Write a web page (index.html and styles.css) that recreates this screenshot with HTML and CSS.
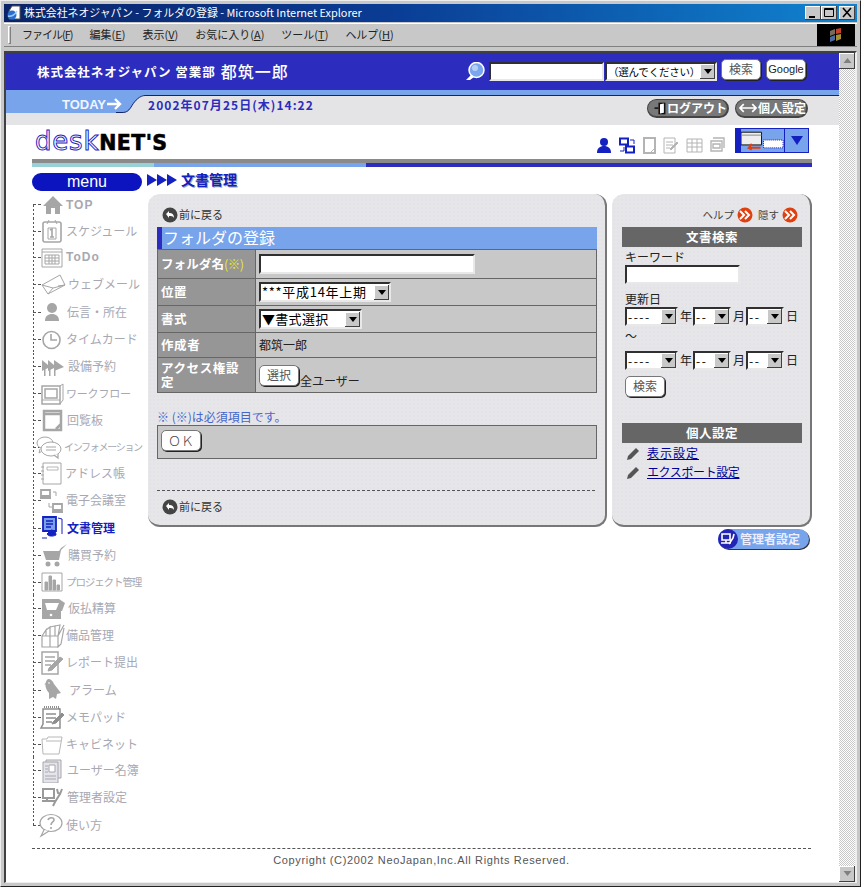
FILE: index.html
```html
<!DOCTYPE html>
<html lang="ja">
<head>
<meta charset="utf-8">
<title>フォルダの登録</title>
<link rel="stylesheet" href="styles.css">
</head>
<body>
<div class="window">
  <div class="titlebar">
    <svg class="title-icon" width="16" height="16" viewBox="0 0 16 16"><path d="M6 1h8v13H3V6z" fill="#fff" stroke="#555"/><circle cx="6" cy="10" r="4.5" fill="#2a6fd0"/><path d="M2 11c3 1 7-1 9-5" stroke="#9fd0ff" stroke-width="1.5" fill="none"/></svg>
    <span class="title-text">株式会社ネオジャパン - フォルダの登録 - Microsoft Internet Explorer</span>
    <div class="win-btns">
      <span class="win-btn"><svg width="14" height="12" viewBox="0 0 14 12"><path d="M3 9h6v2H3z"/></svg></span>
      <span class="win-btn"><svg width="14" height="12" viewBox="0 0 14 12"><path d="M2.5 1.5h9v8h-9z M2.5 2.5h9" fill="none" stroke="#000"/></svg></span>
      <span class="win-btn win-close"><svg width="14" height="12" viewBox="0 0 14 12"><path d="M3 1l8 9M11 1l-8 9" stroke="#000" stroke-width="1.6"/></svg></span>
    </div>
  </div>
  <div class="menubar">
    <span class="grip"></span>
    <span class="m m1">ファイル(<u>F</u>)</span>
    <span class="m">編集(<u>E</u>)</span>
    <span class="m">表示(<u>V</u>)</span>
    <span class="m">お気に入り(<u>A</u>)</span>
    <span class="m">ツール(<u>T</u>)</span>
    <span class="m">ヘルプ(<u>H</u>)</span>
    <span class="throbber"><svg width="16" height="16" viewBox="0 0 16 16"><path d="M2 4l5-2v5l-5 2z" fill="#7a6a5a"/><path d="M8 2l5-1v5l-5 1z" fill="#c8402a"/><path d="M2 10l5-2v5l-5 2z" fill="#4a6aa0"/><path d="M8 8l5-1v5l-5 2z" fill="#a89030"/></svg></span>
  </div>
  <div class="viewport">
    <div class="page">
      <header class="head">
        <span class="org">株式会社ネオジャパン 営業部</span>
        <span class="user">都筑一郎</span>
        <div class="search">
          <svg width="22" height="20" viewBox="0 0 22 20"><circle cx="12.5" cy="8" r="7.5" fill="#7aa6ee" stroke="#fff" stroke-width="1.5"/><circle cx="11" cy="6" r="3" fill="#b9d0f6"/><path d="M7 13l-5 5h4l4-3z" fill="#fff"/></svg>
          <input class="field head-field" type="text">
          <div class="sel sel-google"><span class="sel-text">（選んでください）</span><span class="sel-arrow"></span></div>
          <button class="btn btn-head">検索</button>
          <button class="btn btn-head btn-google">Google</button>
        </div>
      </header>
      <div class="today">
        <div class="today-tab">TODAY<svg width="15" height="12" viewBox="0 0 15 12"><path d="M0 6h13M8 1l5 5-5 5" fill="none" stroke="#fff" stroke-width="2.4"/></svg></div>
        <svg class="today-curve" width="23" height="18" viewBox="0 0 23 18"><path d="M0 18c5 0 7-2 10-7S18 0 23 0H0z" fill="#78a4ec"/><path d="M-6 17.500h6c5 0 7-2 10-7S18 .5 23 .5" fill="none" stroke="#12246a"/></svg>
        <span class="date">2002年07月25日(木)14:22</span>
        <div class="pills">
          <span class="pill pill-out"><svg width="18" height="17" viewBox="0 0 18 17"><path d="M7 1h9v15H7z" fill="#111"/><path d="M9 3l5-1v12l-5 1z" fill="#fff"/><path d="M2 8h5" stroke="#111" stroke-width="2"/></svg>ログアウト</span>
          <span class="pill pill-set"><svg width="19" height="10" viewBox="0 0 19 10"><path d="M1 5h17M5 1L1 5l4 4M14 1l4 4-4 4" fill="none" stroke="#fff" stroke-width="1.8"/></svg>個人設定</span>
        </div>
      </div>
      <div class="brand">
        <div class="logo"><span class="logo-a">desk</span><span class="logo-b">NET'S</span></div>
        <div class="tools">
          <svg width="16" height="17" viewBox="0 0 16 17"><circle cx="8" cy="5" r="4" fill="#1420c0"/><path d="M1 16c0-5 3-7 7-7s7 2 7 7z" fill="#1420c0"/></svg>
          <svg width="16" height="17" viewBox="0 0 16 17" fill="none" stroke="#1420c0"><path d="M1 1.5h8v6H1zM7 9.5h8v6H7z" stroke-width="2"/><path d="M11 3h4v4M5 10v4h-4"/></svg>
          <svg width="15" height="17" viewBox="0 0 15 17" fill="none" stroke="#b4b4b4" stroke-width="2"><path d="M2 1h11v15H2z"/><path d="M9 15l4-4" stroke-width="1"/></svg>
          <svg class="t6" width="16" height="17" viewBox="0 0 16 17" fill="none" stroke="#b4b4b4"><path d="M1 1h11v15H1zM3 5h7M3 8h7M3 11h4"/><path d="M7 12l7-7 1 1-7 7z" fill="#b4b4b4"/></svg>
          <svg width="17" height="17" viewBox="0 0 17 17" fill="none" stroke="#b4b4b4"><path d="M1 2h15v13H1zM1 6h15M1 10h15M6 2v13M11 2v13"/></svg>
          <svg width="15" height="17" viewBox="0 0 15 17" fill="none" stroke="#b4b4b4" stroke-width="1.4"><path d="M1 4h11v10H1zM3 1h11v10M3 7h7v4H3z"/></svg>
          <div class="layout-box">
            <svg width="44" height="22" viewBox="0 0 44 22"><path d="M0 2h21v13H0z" fill="#eee" stroke="#111"/><path d="M0 5h21" stroke="#888"/><path d="M23 10h20v8H23z" fill="#fff" stroke="#1420c0" stroke-dasharray="1 1"/><path d="M20 18H8l3-4M8 18l3 2" stroke="#e04010" stroke-width="2" fill="none"/></svg>
            <span class="layout-arrow"></span>
          </div>
        </div>
      </div>
      <div class="rule"><span class="r1"></span><span class="r2"></span><span class="r3"></span></div>
      <div class="wrap">
        <div class="crumbs">
          <span class="menu-pill">menu</span>
          <svg class="tri" width="30" height="12" viewBox="0 0 30 12" fill="#1420c0"><path d="M0 0l10 6-10 6zM10 0l10 6-10 6zM20 0l10 6-10 6z"/></svg>
          <span class="crumb-title">文書管理</span>
        </div>
        <div class="columns">
          <nav class="nav">
            <div class="row first"><svg width="25" height="24" viewBox="0 0 25 24" fill="#a6a6a6"><path d="M12 3L2 13h3v8h14v-8h3z"/><path d="M10 15h4v6h-4z" fill="#fff"/></svg><span>TOP</span></div>
            <div class="row s"><svg width="25" height="24" viewBox="0 0 25 24" fill="none" stroke="#a6a6a6"><path d="M4 3h14q2 0 2 2v16q0 2-2 2H4q-2 0-2-2V5q0-2 2-2z" stroke-width="1.600"/><path d="M6 5l2-4M16 5l-2-4"/><path d="M7 9h8v11H7z"/><path d="M9 11l2-1v8M9 18h4" stroke-width="1.600"/></svg><span>スケジュール</span></div>
            <div class="row"><svg width="25" height="24" viewBox="0 0 25 24" fill="none" stroke="#a6a6a6"><path d="M1 3h20v18H1z"/><path d="M1 6h20"/><path d="M4 9h14v9H4zM4 12h14M4 15h14M8 9v9M11 9v9M14 9v9"/></svg><span class="lat">ToDo</span></div>
            <div class="row"><svg width="27" height="24" viewBox="0 0 27 24" fill="#fff" stroke="#a6a6a6"><path d="M1 12L19 2l5 10L7 21z"/><path d="M1 12l11 3 12-3M7 21l5-6M24 12l-7 1"/></svg><span>ウェブメール</span></div>
            <div class="row l"><svg width="26" height="24" viewBox="0 0 26 24" fill="#a6a6a6"><circle cx="11" cy="8" r="5"/><path d="M4 21c0-5 3-7 7-7s7 2 7 7z"/></svg><span>伝言・所在</span></div>
            <div class="row"><svg width="25" height="24" viewBox="0 0 25 24" fill="none" stroke="#a6a6a6" stroke-width="1.6"><circle cx="10.5" cy="12" r="8.5"/><path d="M10 6v6h6"/></svg><span>タイムカード</span></div>
            <div class="row"><svg width="27" height="24" viewBox="0 0 27 24" fill="#a6a6a6"><path d="M1 5l6 5v-5l6 5v-5l10 7-10 4v-3l-6 3v-3l-6 3z"/><path d="M3 12h1.500v9H3zM8 12h1.500v9H8zM13 12h1.500v9H13z"/></svg><span>設備予約</span></div>
            <div class="row"><svg width="25" height="24" viewBox="0 0 25 24" fill="none" stroke="#a6a6a6"><path d="M1 4h18v18H1z" stroke-width="1.500"/><path d="M4 7h12v9H4z" stroke-width="1.500"/><path d="M1 18h18M19 4l3-2v16l-3 4"/></svg><span class="n11">ワークフロー</span></div>
            <div class="row"><svg width="26" height="24" viewBox="0 0 26 24" fill="none" stroke="#a6a6a6" stroke-width="2.500"><path d="M3 2h17v19H3zM3 5h17M15 20l5-5"/></svg><span>回覧板</span></div>
            <div class="row s"><svg width="23" height="24" viewBox="0 0 23 24" fill="#fff" stroke="#a6a6a6" overflow="visible"><ellipse cx="4" cy="8" rx="8" ry="6"/><path d="M-1 14l-1 4 5-3"/><ellipse cx="10" cy="14" rx="10" ry="7"/><path d="M5 12h10M5 15h10M13 20l4 3v-4" stroke-width="1.200"/></svg><span class="n9">インフォメーション</span></div>
            <div class="row"><svg width="24" height="24" viewBox="0 0 24 24" fill="none" stroke="#a6a6a6"><path d="M2 1h18v21H2z"/><path d="M0 5h3M0 9h3M0 13h3M0 17h3"/><path d="M6 5h11v3H6z" stroke-width=".8"/></svg><span>アドレス帳</span></div>
            <div class="row"><svg width="25" height="24" viewBox="0 0 25 24" fill="none" stroke="#a6a6a6" overflow="visible"><path d="M0 1h9v6H0zM-1 9h11M12 15h9v6h-9zM11 23h11" stroke-width="1.800"/><path d="M12 3h3v4M8 14v4h3"/></svg><span>電子会議室</span></div>
            <div class="row l on"><svg width="26" height="24" viewBox="0 0 26 24" fill="none" stroke="#1420c0"><path d="M2 1h13v14H2z" fill="#7aa0ea" stroke-width="1.800"/><path d="M5 5h7M5 8h7M5 11h5" stroke-width="1.500"/><path d="M17 2l4 1v15"/><path d="M1 22h5M10 14c3 0 5 2 5 5-4 2-8 1-9-1z" fill="#1420c0"/></svg><span>文書管理</span></div>
            <div class="row"><svg width="27" height="24" viewBox="0 0 27 24" fill="#a6a6a6"><path d="M2 7h16l2-3 6-4-6 6-2 10H5z"/><circle cx="7" cy="20" r="2.500"/><circle cx="16" cy="20" r="2.500"/></svg><span>購買予約</span></div>
            <div class="row s"><svg width="25" height="24" viewBox="0 0 25 24" fill="none" stroke="#a6a6a6"><path d="M1 3h20v18H1z"/><path d="M4 12h2.500v8H4zM8 6h2.500v14H8zM12 10h2.500v10H12zM16 15h2.500v5H16z" fill="#a6a6a6"/></svg><span class="n10">プロジェクト管理</span></div>
            <div class="row"><svg width="27" height="24" viewBox="0 0 27 24" fill="#a6a6a6"><path d="M1 2h17l6 4-3 8H1z"/><path d="M1 14h19v8H1z"/><path d="M4 6h14l-3 7H6z" fill="#fff"/><circle cx="10" cy="18" r="1.300" fill="#fff"/></svg><span>仮払精算</span></div>
            <div class="row"><svg width="25" height="24" viewBox="0 0 25 24" fill="none" stroke="#a6a6a6" stroke-width="1.200"><path d="M1 12h16v11H1zM9 12v11M1 12l4-6v6M5 6l4-3v9M9 3l5-1v10M14 2l5-1-2 11M23 1l-6 11v11l3-3 3-16"/></svg><span>備品管理</span></div>
            <div class="row"><svg width="25" height="24" viewBox="0 0 25 24" fill="none" stroke="#a6a6a6"><path d="M1 1h16v22H1z" stroke-width="1.500"/><path d="M4 6h10M4 10h10M4 14h6" stroke-width="1.500"/><path d="M8 17l11-11 3 2-11 11-4 1z" fill="#a6a6a6"/></svg><span>レポート提出</span></div>
            <div class="row l"><svg width="28" height="24" viewBox="0 0 28 24" fill="#a6a6a6"><path d="M7 1c3 0 5 2 6 5l7 9-4 1-1 5-3-2-4 2v-6C4 11 3 4 7 1z"/><path d="M3 6l3-1v2z"/><circle cx="8" cy="5" r=".8" fill="#fff"/></svg><span>アラーム</span></div>
            <div class="row"><svg width="25" height="24" viewBox="0 0 25 24" fill="none" stroke="#8f8f8f" overflow="visible"><path d="M2 3h17v19H0l2-4z" stroke-width="1.500"/><path d="M3 1h15v2" stroke-dasharray="1 1" stroke-width="2"/><path d="M5 8h10M5 12h10M5 16h6" stroke-width="1.600"/><path d="M12 16l9-9 2 2-8 8-4 1z" fill="#8f8f8f"/></svg><span>メモパッド</span></div>
            <div class="row s"><svg width="25" height="24" viewBox="0 0 25 24" fill="none" stroke="#b8b8b8"><path d="M1 7h5l1-2h14l-3 17H2zM5 9h15"/></svg><span>キャビネット</span></div>
            <div class="row"><svg width="26" height="24" viewBox="0 0 26 24" fill="#e4e4ee" stroke="#a6a6a6"><path d="M5 1h15v18H5z"/><path d="M2 3h15v21H2z"/><path d="M4 7h3M4 10h3M4 13h3M4 17h11M4 20h11" fill="none"/><path d="M8 6h6v7H8z" fill="#fff"/></svg><span>ユーザー名簿</span></div>
            <div class="row"><svg width="26" height="24" viewBox="0 0 26 24" fill="none" stroke="#9a9a9a" stroke-width="2"><path d="M2 3h11v9H2zM1 15h13M6 12v3"/><path d="M21 3l-2 5-5 8-2 4M16 3l1 4 3 1"/></svg><span>管理者設定</span></div>
            <div class="row last l"><svg width="25" height="24" viewBox="0 0 25 24" fill="#fff" stroke="#a6a6a6" stroke-width="1.200" overflow="visible"><ellipse cx="10" cy="10" rx="11" ry="8.500"/><path d="M3 17l-3 6 8-5"/><path d="M7 7c1-3 6-3 6 0 0 2-3 2-3 5M10 14v2" fill="none" stroke-width="1.600"/></svg><span>使い方</span></div>
          </nav>
          <div class="content">
            <div class="panels">
              <main class="panel panel-main">
                <a class="back"><svg width="16" height="16" viewBox="0 0 16 16"><circle cx="8" cy="8" r="7.500" fill="#444"/><path d="M4 7l3-3v2c3 0 5 1 5 5-1-2-3-2-5-2v2z" fill="#fff"/></svg>前に戻る</a>
                <h1 class="form-title">フォルダの登録</h1>
                <table class="form">
                  <tr class="r-name"><th>フォルダ名<em>(※)</em></th><td><input class="field name-field" type="text"></td></tr>
                  <tr class="r-pos"><th>位置</th><td><div class="sel sel-pos"><span class="sel-text">***平成14年上期</span><span class="sel-arrow"></span></div></td></tr>
                  <tr class="r-pos"><th>書式</th><td><div class="sel sel-fmt"><span class="sel-text">▼書式選択</span><span class="sel-arrow"></span></div></td></tr>
                  <tr class="r-auth"><th>作成者</th><td>都筑一郎</td></tr>
                  <tr class="r-acc"><th>アクセス権設定</th><td><div class="acc"><button class="btn">選択</button><span>全ユーザー</span></div></td></tr>
                </table>
                <p class="note">※ (※)は必須項目です。</p>
                <div class="okbar"><button class="btn btn-ok">ＯＫ</button></div>
                <div class="dots"></div>
                <a class="back"><svg width="16" height="16" viewBox="0 0 16 16"><circle cx="8" cy="8" r="7.500" fill="#444"/><path d="M4 7l3-3v2c3 0 5 1 5 5-1-2-3-2-5-2v2z" fill="#fff"/></svg>前に戻る</a>
              </main>
              <aside class="panel panel-side">
                <div class="side-top">
                  <span>ヘルプ</span><svg width="16" height="16" viewBox="0 0 16 16"><circle cx="8" cy="8" r="7.500" fill="#e0400f"/><path d="M3 4l4 4-4 4M8 4l4 4-4 4" fill="none" stroke="#fff" stroke-width="2"/></svg>
                  <span class="hide">隠す</span><svg width="16" height="16" viewBox="0 0 16 16"><circle cx="8" cy="8" r="7.500" fill="#e0400f"/><path d="M3 4l4 4-4 4M8 4l4 4-4 4" fill="none" stroke="#fff" stroke-width="2"/></svg>
                </div>
                <h2 class="side-head">文書検索</h2>
                <div class="side-form">
                  <label class="lbl">キーワード</label>
                  <input class="field kw-field" type="text">
                  <label class="lbl lbl-date">更新日</label>
                  <div class="dates">
                    <div class="sel sel-y"><span class="sel-text">----</span><span class="sel-arrow"></span></div><span>年</span>
                    <div class="sel sel-m"><span class="sel-text">--</span><span class="sel-arrow"></span></div><span>月</span>
                    <div class="sel sel-m"><span class="sel-text">--</span><span class="sel-arrow"></span></div><span>日</span>
                  </div>
                  <div class="tilde">～</div>
                  <div class="dates">
                    <div class="sel sel-y"><span class="sel-text">----</span><span class="sel-arrow"></span></div><span>年</span>
                    <div class="sel sel-m"><span class="sel-text">--</span><span class="sel-arrow"></span></div><span>月</span>
                    <div class="sel sel-m"><span class="sel-text">--</span><span class="sel-arrow"></span></div><span>日</span>
                  </div>
                  <button class="btn btn-search">検索</button>
                </div>
                <h2 class="side-head side-head2">個人設定</h2>
                <ul class="links">
                  <li><svg width="15" height="15" viewBox="0 0 15 15"><path d="M1 14l1-4 8-8 3 3-8 8z" fill="#555"/></svg><a class="wide" href="#">表示設定</a></li>
                  <li><svg width="15" height="15" viewBox="0 0 15 15"><path d="M1 14l1-4 8-8 3 3-8 8z" fill="#555"/></svg><a class="tight" href="#">エクスポート設定</a></li>
                </ul>
              </aside>
            </div>
            <div class="admin"><span class="admin-pill"><svg width="21" height="20" viewBox="0 0 21 20"><circle cx="10" cy="10" r="10" fill="#2424b4"/><path d="M4 5h8v6H4zM3 14h10M8 11v3M16 5l-1 4-4 6" fill="none" stroke="#fff" stroke-width="1.600"/></svg>管理者設定</span></div>
          </div>
        </div>
        <footer class="foot">Copyright (C)2002 NeoJapan,Inc.All Rights Reserved.</footer>
      </div>
    </div>
    <div class="scrollbar">
      <span class="sb-btn"><svg width="9" height="6" viewBox="0 0 9 6"><path d="M4.500 0l4 5h-8z" fill="#808080"/></svg></span>
      <span class="sb-track"></span>
      <span class="sb-btn"><svg width="9" height="6" viewBox="0 0 9 6"><path d="M4.500 5l4-5h-8z" fill="#808080"/></svg></span>
    </div>
  </div>
</div>
</body>
</html>
```

FILE: styles.css
```css
* { box-sizing: border-box; }
html, body { margin: 0; padding: 0; }
body {
  width: 861px; height: 887px; overflow: hidden; background: #c8c8c8;
  font-family: "Noto Sans CJK JP", "Liberation Sans", sans-serif;
  font-size: 12px; line-height: 1.2; color: #222;
}
.window {
  height: 887px; display: flex; flex-direction: column; padding: 3px;
  border: 1px solid #808080; border-top-color: #eee; border-left-color: #eee;
  border-right-color: #222; border-bottom-color: #222;
}
.titlebar {
  height: 18px; flex: none; display: flex; align-items: center; padding-left: 2px;
  background: linear-gradient(90deg, #0a246a 0%, #0a3c94 45%, #1084d0 100%);
  color: #fff;
}
.title-icon { flex: none; }
.title-text { margin-left: 2px; font-size: 10.900px; white-space: nowrap; }
.win-btns { margin-left: auto; display: flex; padding-right: 2px; }
.win-btn {
  width: 16px; height: 14px; background: #c8c8c8; display: flex; align-items: center; justify-content: center;
  box-shadow: inset -1px -1px 0 #404040, inset 1px 1px 0 #fff;
}
.win-close { margin-left: 2px; }
.menubar {
  height: 24px; flex: none; margin-top: 1px; display: flex; align-items: center;
  border-top: 1px solid #fff; border-bottom: 1px solid #808080; font-size: 11px; color: #222;
}
.grip { width: 3px; height: 18px; margin-left: 4px; margin-right: 11px; border: 1px solid; border-color: #fff #808080 #808080 #fff; flex: none; }
.m { margin-right: 17px; white-space: nowrap; }
.m1 { letter-spacing: -1px; }
.throbber { margin-left: auto; margin-right: 2px; width: 38px; height: 22px; background: #000; display: flex; align-items: center; justify-content: center; }
.viewport {
  flex: 1; margin-top: 4px; display: flex; min-height: 0;
  border-top: 2px solid #404040; border-left: 2px solid #404040;
  border-right: 2px solid #eee; border-bottom: 1px solid #eee;
}
.page { flex: 1; background: #fff; display: flex; flex-direction: column; min-width: 0; overflow: hidden; }
.scrollbar { width: 16px; flex: none; display: flex; flex-direction: column; }
.sb-btn { height: 16px; flex: none; background: #c8c8c8; display: flex; align-items: center; justify-content: center; box-shadow: inset -1px -1px 0 #404040, inset 1px 1px 0 #fff; }
.sb-track { flex: 1; background: repeating-conic-gradient(#fff 0 25%, #c8c8c8 0 50%) 0 0 / 2px 2px; }

.head { height: 37px; flex: none; background: #2c2cbe; display: flex; align-items: center; padding-left: 31px; color: #fff; }
.org { font-size: 12.500px; font-weight: 700; letter-spacing: .95px; white-space: nowrap; }
.user { margin-left: 5px; font-size: 16px; font-weight: 500; letter-spacing: 1px; white-space: nowrap; }
.search { margin-left: auto; display: flex; align-items: center; margin-right: 33px; }
.field {
  display: block; background: #fff; border: 2px solid; border-color: #303030 #e8e8e8 #e8e8e8 #303030; padding: 0; margin: 0; border-radius: 0;
}
.head-field { width: 115px; height: 19px; margin-left: 3px; }
.sel {
  display: flex; align-items: center; height: 19px; background: #fff; color: #000;
  border: 2px solid; border-color: #303030 #e8e8e8 #e8e8e8 #303030; font-size: 12px; flex: none;
}
.sel-text { flex: 1; padding-left: 1px; white-space: nowrap; letter-spacing: .3px; line-height: 14px; }
.sel-arrow {
  width: 15px; height: 15px; flex: none; background: #c8c8c8; display: flex; align-items: center; justify-content: center;
  box-shadow: inset -1px -1px 0 #404040, inset 1px 1px 0 #fff;
}
.sel-arrow::after { content: ""; border: 4px solid transparent; border-top: 5px solid #000; border-bottom: 0; }
.sel-google { width: 112px; margin-left: 1px; }
.sel-google .sel-text { font-size: 10.500px; letter-spacing: -.2px; }
.sel-y .sel-text, .sel-m .sel-text { letter-spacing: 1.500px; }
.sel-pos .sel-text { letter-spacing: .7px; }
.btn {
  width: 40px; height: 21px; padding: 0; background: #fff; color: #555; border: 1px solid #777; border-radius: 5px;
  box-shadow: 1px 1px 0 #222; font: inherit; font-size: 12px; flex: none;
}
.btn-head { margin-left: 4px; margin-top: -4px; }
.btn-google { margin-left: 5px; color: #222; font-size: 11px; font-family: "Liberation Sans", sans-serif; }
.today {
  height: 35px; flex: none; background: #e4e4e6 linear-gradient(#12246a, #12246a) 139px 0 / 100% 1px no-repeat;
  border-top: 5px solid #78a4ec; display: flex; align-items: flex-start;
}
.today-tab {
  width: 116px; height: 18px; flex: none; background: #78a4ec; color: #f0f4ff; font: 700 13px "Liberation Sans", sans-serif;
  display: flex; align-items: center; justify-content: flex-end; gap: 1px;
}
.today-curve { flex: none; overflow: visible; }
.date { margin-left: 3px; margin-top: 3px; color: #2c2cbe; font-weight: 700; font-size: 12px; letter-spacing: 1.050px; white-space: nowrap; }
.pills { margin-left: auto; margin-right: 31px; margin-top: 4px; display: flex; gap: 6px; }
.pill {
  height: 19px; display: flex; align-items: center; background: #787878; color: #fff; border-radius: 10px; font-weight: 700; font-size: 12px;
  border: 1px solid #444; border-width: 1px 2px 2px 1px; white-space: nowrap;
}
.pill-out { width: 82px; padding-left: 5px; }
.pill-set { width: 73px; padding-left: 3px; gap: 1px; }
.brand { height: 34px; flex: none; display: flex; align-items: flex-end; padding-left: 29px; padding-right: 30px; }
.logo { display: flex; align-items: baseline; height: 28px; line-height: 28px; font-family: "DejaVu Sans", sans-serif; margin-bottom: 4px; }
.logo-a { font-size: 26px; color: #fff; -webkit-text-stroke: 1px #2626c0; letter-spacing: .8px; }
.logo-b { font-size: 20.500px; font-weight: 700; color: #000; -webkit-text-stroke: .6px #000; letter-spacing: .4px; }
.tools { margin-left: auto; display: flex; align-items: flex-end; gap: 7px; padding-bottom: 5px; }
.t6 { margin-left: -1px; }
.layout-box {
  width: 74px; height: 25px; margin-left: 3px; margin-bottom: 1px; background: #78a4ec; display: flex; align-items: center; justify-content: flex-end;
  border: 1px solid #1420c0; border-left-width: 6px;
}
.layout-arrow { width: 24px; height: 100%; flex: none; border-left: 1px solid #1420c0; display: flex; align-items: center; justify-content: center; }
.layout-arrow::after { content: ""; border: 6px solid transparent; border-top: 9px solid #1420c0; border-bottom: 0; }
.rule { margin-left: 26px; margin-right: 27px; height: 8px; flex: none; border-top: 4px solid #8a8a8a; display: flex; }
.r1 { width: 122px; background: #98d0d8; }
.r2 { width: 212px; background: #78a4ec; }
.r3 { flex: 1; background: #2c2cbe; }
.wrap { padding: 5px 27px 0 26px; }
.crumbs { height: 19px; display: flex; align-items: center; }
.menu-pill {
  width: 110px; height: 18px; border-radius: 9px; background: #0c14c0; color: #fff; text-align: center;
  font: 16px/17px "Liberation Sans", sans-serif; flex: none;
}
.tri { margin-left: 5px; margin-top: -3px; flex: none; }
.crumb-title { margin-left: 4px; margin-top: -4px; line-height: 15px; color: #1420c0; font-weight: 700; font-size: 14px; text-shadow: 1px 1px 0 #9ab; white-space: nowrap; }
.columns { display: flex; align-items: flex-start; }
.nav { width: 116px; flex: none; margin-left: 1px; color: #a8a8b2; font-size: 12px; }
.row {
  height: 27px; display: flex; align-items: center; white-space: nowrap;
  background: repeating-linear-gradient(to bottom, #555 0 2px, transparent 2px 4px) 0 0 / 1px 100% no-repeat;
}
.row.s { height: 26px; }
.row.l { height: 28px; }
.row.first { background-position: 0 bottom; background-size: 1px 50%; }
.row.last { background-size: 1px 50%; }
.row::before { content: ""; width: 8px; flex: none; border-top: 1px dashed #555; }
.row svg { flex: none; }
.row.on { color: #1420c0; font-weight: 700; }
.row.first span { font: 700 12px "Liberation Sans", sans-serif; letter-spacing: 1px; }
.row .lat { font-family: "Liberation Sans", sans-serif; font-weight: 700; letter-spacing: 1px; }
.row .n11 { font-size: 11px; letter-spacing: -.2px; }
.row .n10 { font-size: 10.500px; letter-spacing: -1.100px; }
.row .n9 { font-size: 10px; letter-spacing: -1.300px; }
.content { flex: 1; min-width: 0; margin-left: -1px; margin-top: 3px; }
.panels { display: flex; gap: 5px; }
.panel {
  height: 333px; background-color: #e6e6e8;
  background-image: radial-gradient(#dcdce8 .6px, transparent .8px); background-size: 4px 4px;
  border-radius: 12px; border-right: 2px solid #777; border-bottom: 2px solid #777;
}
.panel-main { width: 459px; padding: 13px 8px 0 9px; }
.panel-side { width: 200px; padding: 13px 8px 0 10px; }
.back { display: flex; align-items: center; height: 16px; margin-left: 5px; gap: 1px; font-size: 11px; color: #333; }
.form-title {
  margin: 4px 0 0; height: 22px; background: #78a4ec; border-left: 5px solid #2c2cbe; color: #fff;
  font-size: 16px; font-weight: 400; line-height: 21px; padding-left: 1px; letter-spacing: 0;
}
.form { width: 440px; border-collapse: collapse; table-layout: fixed; background: #c8c8c8; color: #222; }
.form th, .form td { border: 1px solid #666; padding: 0; }
.form th { width: 98px; background: #969696; color: #fff; font-size: 12.500px; font-weight: 700; text-align: left; padding: 0 6px 0 3px; letter-spacing: .6px; line-height: 14px; }
.form td { padding-left: 3px; font-size: 12px; }
.form em { color: #e8e820; font-style: normal; font-weight: 400; letter-spacing: -.5px; }
.r-name th { white-space: nowrap; letter-spacing: .1px; }
.r-name { height: 29px; }
.r-pos { height: 27px; }
.r-auth { height: 25px; }
.r-acc { height: 35px; }
.name-field { width: 216px; height: 20px; }
.sel-pos { width: 132px; height: 20px; font-size: 13px; }
.sel-fmt { width: 103px; height: 20px; font-size: 13px; }
.acc { display: flex; align-items: flex-end; font-size: 12px; }
.acc span { margin-bottom: -3px; margin-left: 1px; }
.note { margin: 17px 0 0; height: 15px; color: #4466cc; font-size: 12px; line-height: 14px; }
.okbar { height: 34px; background: #c8c8c8; border: 1px solid #666; padding: 4px 3px; }
.btn-ok { color: #444; font-size: 13px; font-weight: 300; }
.dots { margin-top: 31px; margin-right: 2px; height: 1px; border-top: 1px dashed #555; margin-bottom: 8px; }
.side-top { display: flex; align-items: center; justify-content: flex-end; height: 16px; margin-right: 4px; font-size: 10.500px; color: #444; gap: 3px; }
.hide { margin-left: 2px; }
.side-head { margin: 4px 0 0; height: 20px; background: #666; color: #fff; font-size: 12.500px; font-weight: 700; text-align: center; line-height: 19px; letter-spacing: .5px; }
.side-form { padding-left: 3px; color: #222; display: flex; flex-direction: column; align-items: flex-start; height: 156px; }
.lbl { height: 15px; margin-top: 2px; line-height: 15px; font-size: 12px; }
.kw-field { width: 115px; height: 19px; margin-top: 1px; }
.lbl-date { margin-top: 7px; height: 16px; }
.dates { display: flex; align-items: center; gap: 1px; font-size: 12px; }
.dates > span { margin-left: 1px; }
.sel-y { width: 53px; }
.sel-m { width: 38px; }
.tilde { height: 16px; margin-top: 2px; margin-bottom: 7px; line-height: 16px; }
.btn-search { margin-top: 6px; }
.side-head2 { margin-top: 20px; }
.links { list-style: none; margin: 0; padding: 0 0 0 4px; }
.links li { height: 19px; display: flex; align-items: center; }
.links li:first-child { margin-top: 1px; }
.links a { margin-left: 6px; color: #000099; font-size: 12px; }
.links .wide { letter-spacing: 1px; }
.links .tight { letter-spacing: -.4px; }
.admin { display: flex; justify-content: flex-end; padding-right: 3px; margin-top: 2px; }
.admin-pill {
  width: 91px; height: 20px; display: flex; align-items: center; background: #78a4ec; color: #eef; border-radius: 10px; font-weight: 700; font-size: 12px; gap: 1px;
  box-shadow: 1px 1px 0 #333; white-space: nowrap;
}
.foot {
  margin-top: 9px; width: 779px; border-top: 1px dashed #555; text-align: center; padding-top: 2px;
  font-family: "Liberation Sans", sans-serif; font-size: 11px; line-height: 18px; letter-spacing: .65px; color: #555; white-space: nowrap;
}
```
